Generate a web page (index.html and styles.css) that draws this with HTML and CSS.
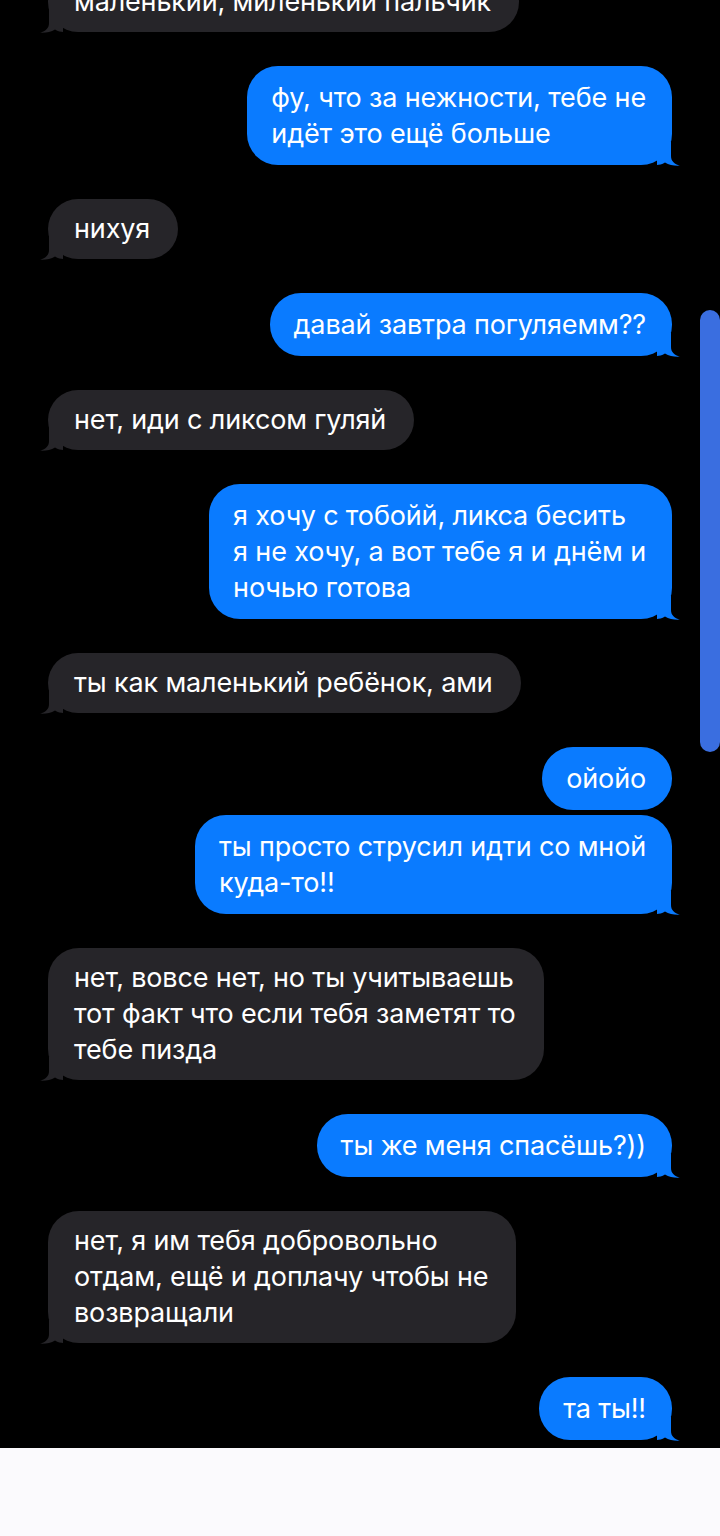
FILE: index.html
```html
<!DOCTYPE html>
<html lang="ru">
<head>
<meta charset="utf-8">
<link rel="stylesheet" href="styles.css">
</head>
<body>
<div class="screen">
  <div class="chat">
    <div class="msg in">маленький, миленький пальчик<svg class="tl" viewBox="0 0 24 24"><path d="M0 0 L14 0 L14 14 C14 19 17 22 23 23.6 C18 24 12 23 8 20.5 C5 22.3 2 23 0 23 Z"/></svg></div>
    <div class="msg out">фу, что за нежности, тебе не<br>идёт это ещё больше<svg class="tl" viewBox="0 0 24 24"><path d="M0 0 L14 0 L14 14 C14 19 17 22 23 23.6 C18 24 12 23 8 20.5 C5 22.3 2 23 0 23 Z"/></svg></div>
    <div class="msg in">нихуя<svg class="tl" viewBox="0 0 24 24"><path d="M0 0 L14 0 L14 14 C14 19 17 22 23 23.6 C18 24 12 23 8 20.5 C5 22.3 2 23 0 23 Z"/></svg></div>
    <div class="msg out">давай завтра погуляемм??<svg class="tl" viewBox="0 0 24 24"><path d="M0 0 L14 0 L14 14 C14 19 17 22 23 23.6 C18 24 12 23 8 20.5 C5 22.3 2 23 0 23 Z"/></svg></div>
    <div class="msg in">нет, иди с ликсом гуляй<svg class="tl" viewBox="0 0 24 24"><path d="M0 0 L14 0 L14 14 C14 19 17 22 23 23.6 C18 24 12 23 8 20.5 C5 22.3 2 23 0 23 Z"/></svg></div>
    <div class="msg out">я хочу с тобойй, ликса бесить<br>я не хочу, а вот тебе я и днём и<br>ночью готова<svg class="tl" viewBox="0 0 24 24"><path d="M0 0 L14 0 L14 14 C14 19 17 22 23 23.6 C18 24 12 23 8 20.5 C5 22.3 2 23 0 23 Z"/></svg></div>
    <div class="msg in">ты как маленький ребёнок, ами<svg class="tl" viewBox="0 0 24 24"><path d="M0 0 L14 0 L14 14 C14 19 17 22 23 23.6 C18 24 12 23 8 20.5 C5 22.3 2 23 0 23 Z"/></svg></div>
    <div class="group">
      <div class="msg out">ойойо</div>
      <div class="msg out">ты просто струсил идти со мной<br>куда-то!!<svg class="tl" viewBox="0 0 24 24"><path d="M0 0 L14 0 L14 14 C14 19 17 22 23 23.6 C18 24 12 23 8 20.5 C5 22.3 2 23 0 23 Z"/></svg></div>
    </div>
    <div class="msg in">нет, вовсе нет, но ты учитываешь<br>тот факт что если тебя заметят то<br>тебе пизда<svg class="tl" viewBox="0 0 24 24"><path d="M0 0 L14 0 L14 14 C14 19 17 22 23 23.6 C18 24 12 23 8 20.5 C5 22.3 2 23 0 23 Z"/></svg></div>
    <div class="msg out">ты же меня спасёшь?))<svg class="tl" viewBox="0 0 24 24"><path d="M0 0 L14 0 L14 14 C14 19 17 22 23 23.6 C18 24 12 23 8 20.5 C5 22.3 2 23 0 23 Z"/></svg></div>
    <div class="msg in">нет, я им тебя добровольно<br>отдам, ещё и доплачу чтобы не<br>возвращали<svg class="tl" viewBox="0 0 24 24"><path d="M0 0 L14 0 L14 14 C14 19 17 22 23 23.6 C18 24 12 23 8 20.5 C5 22.3 2 23 0 23 Z"/></svg></div>
    <div class="msg out">та ты!!<svg class="tl" viewBox="0 0 24 24"><path d="M0 0 L14 0 L14 14 C14 19 17 22 23 23.6 C18 24 12 23 8 20.5 C5 22.3 2 23 0 23 Z"/></svg></div>
  </div>
  <div class="bottom"></div>
  <div class="scrollbar"></div>
</div>
</body>
</html>
```

FILE: styles.css
```css
html, body {
  margin: 0;
  padding: 0;
  background: #000;
}
.screen {
  position: relative;
  width: 720px;
  height: 1536px;
  overflow: hidden;
  background: #000;
  display: flex;
  flex-direction: column;
  font-family: Inter, "Noto Sans", "Liberation Sans", sans-serif;
}
.chat {
  display: flex;
  flex-direction: column;
  gap: 34px;
  padding: 0 48px 8px 48px;
  margin-top: -28px;
}
.group {
  display: flex;
  flex-direction: column;
  align-items: flex-end;
  gap: 5px;
}
.msg {
  position: relative;
  font-size: 27px;
  line-height: 36px;
  color: #fff;
  border-radius: 31px;
  width: fit-content;
  letter-spacing: -0.15px;
}
.in {
  align-self: flex-start;
  background: #262529;
  padding: 12px 28px 12px 26px;
}
.out {
  align-self: flex-end;
  background: #0a7bff;
  padding: 13.5px 26px 13.5px 24px;
}
.tl {
  position: absolute;
  bottom: -1px;
  width: 24px;
  height: 24px;
}
.out .tl {
  right: -9px;
  fill: #0a7bff;
}
.in .tl {
  left: -9px;
  fill: #262529;
  transform: scaleX(-1);
}
.bottom {
  flex: 1;
  background: #fbfafd;
}
.scrollbar {
  position: absolute;
  top: 310px;
  right: 0;
  width: 20px;
  height: 442px;
  background: #3a6ee0;
  border-radius: 10px;
}
```
